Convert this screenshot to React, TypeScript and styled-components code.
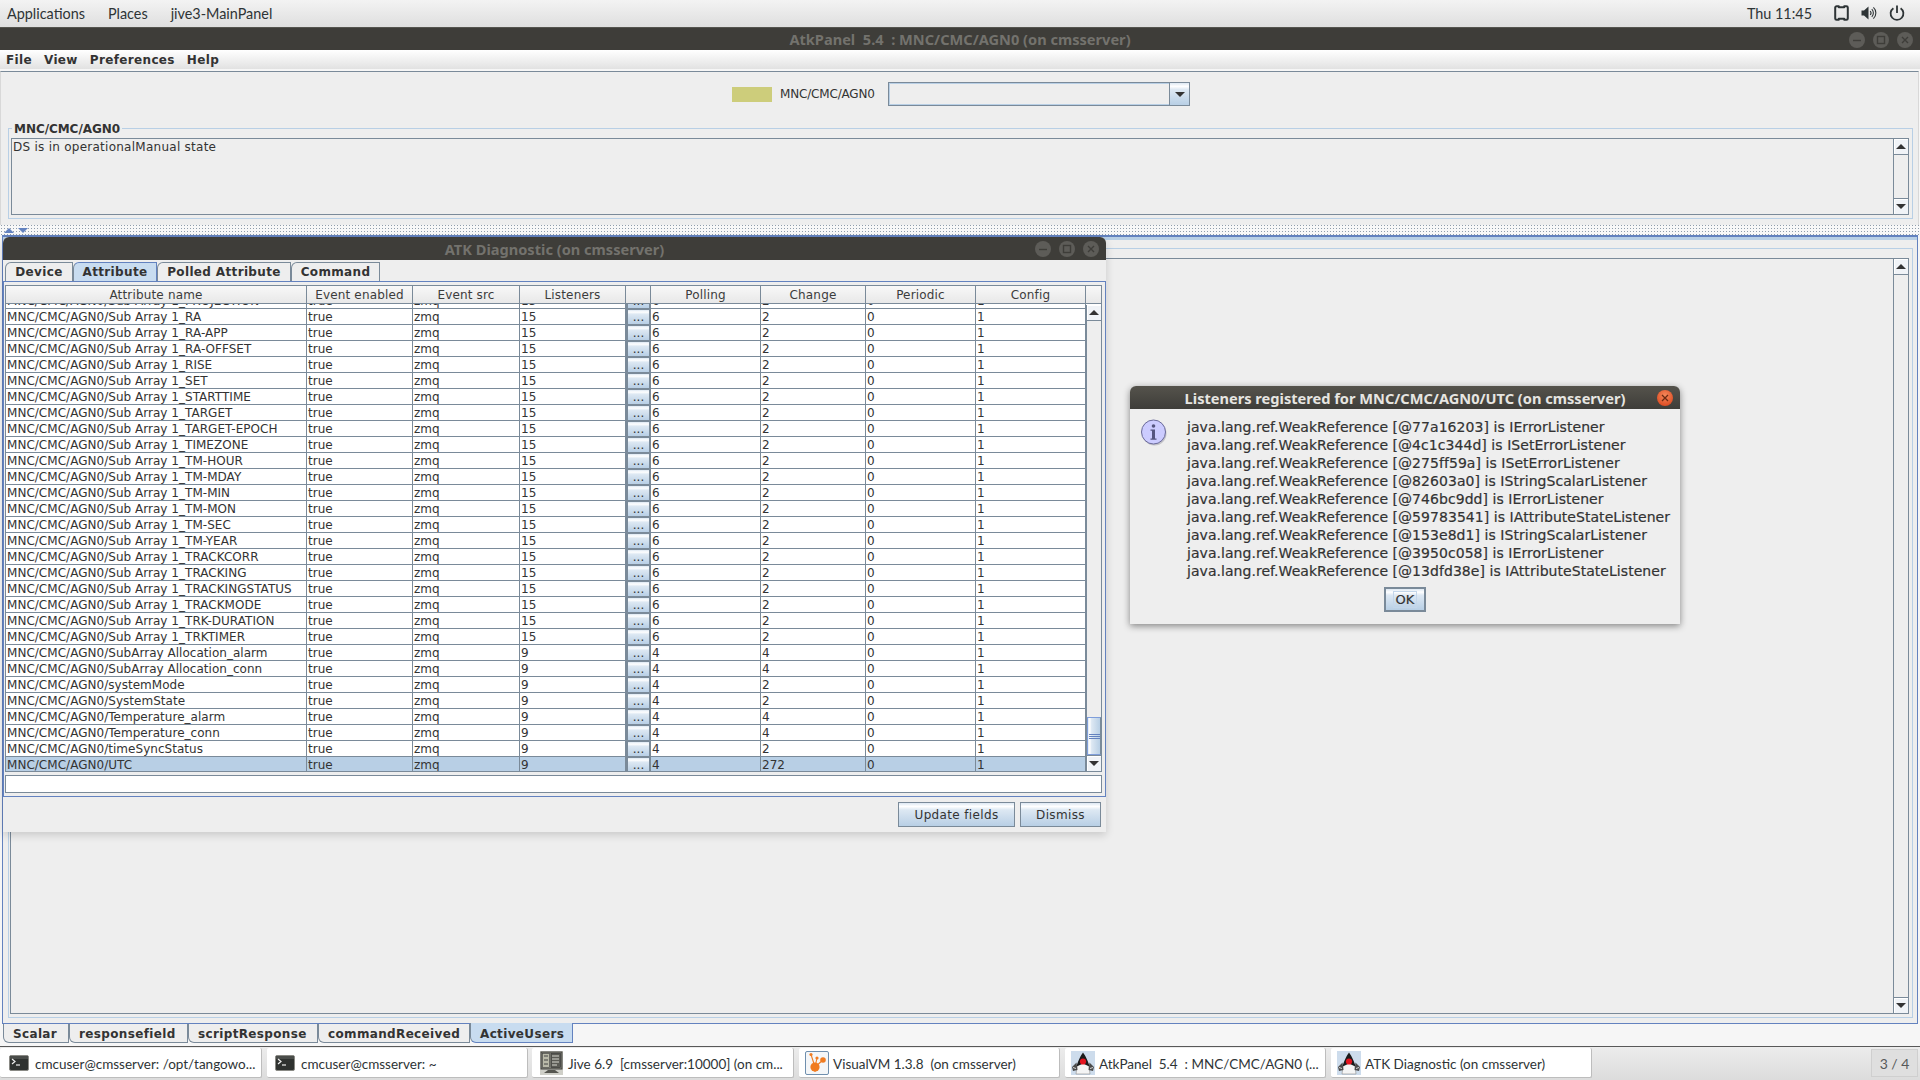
import React from "react";
import styled, { createGlobalStyle } from "styled-components";

const Global = createGlobalStyle`
  html, body { margin: 0; padding: 0; background: #eeeeee; }
  * { box-sizing: border-box; }
`;

const GNOME = `"Lato", "Noto Sans", sans-serif`;
const JAVA = `"DejaVu Sans", sans-serif`;
const LINE = "#7a8a99";
const LIGHT = "#b8cfe5";
const BLUE = "#6382bf";
const BTN = "linear-gradient(#dde8f3 0%, #ffffff 15%, #dde8f3 30%, #b8cfe5 100%)";
const BTN_H = "linear-gradient(90deg, #dde8f3 0%, #ffffff 15%, #dde8f3 30%, #b8cfe5 100%)";

const Desktop = styled.div`
  position: relative; width: 1920px; height: 1080px; overflow: hidden;
  display: flex; flex-direction: column; background: #eeeeee; color: #333333;
  font-family: ${JAVA}; font-size: 12px;
`;

/* ---------- GNOME top panel ---------- */
const TopBar = styled.div`
  flex: none; height: 28px; display: flex; align-items: center; padding: 0 15px 1px 7px;
  background: linear-gradient(#f3f3f3, #dfdfdf); border-bottom: 1px solid #55554f;
  font-family: ${GNOME}; font-size: 14.4px; color: #2e3436;
`;
const TopItem = styled.span`
  margin-right: 23px; white-space: pre;
`;
const TopSpacer = styled.div`flex: 1;`;
const Clock = styled.span`margin-right: 10px; font-size: 14.4px;`;
const TrayIcon = styled.svg`
  display: block; margin-left: 12px; flex: none; color: #2e3436;
`;

/* ---------- window frame ---------- */
const AtkWindow = styled.div`
  flex: 1; min-height: 0; display: flex; flex-direction: column;
`;
const TitleBar = styled.div`
  position: relative; flex: none; height: ${(p) => p.$h}px; background: #3e3d39;
  display: flex; align-items: center; justify-content: center;
  border-radius: ${(p) => p.$r}px ${(p) => p.$r}px 0 0;
`;
const TitleText = styled.span`
  font-family: "Noto Sans", sans-serif; font-weight: 700; font-size: 14.6px; color: #73726d;
  white-space: pre;
`;
const WmButtons = styled.div`
  position: absolute; right: 7px; top: 4px; display: flex; gap: 8px;
`;
const WmButton = styled.svg`display: block;`;

const MenuBar = styled.div`
  flex: none; height: 19px; display: flex; align-items: center; padding-left: 6px; gap: 12px;
  background: linear-gradient(#ffffff, #e2e2e2);
  font-weight: 700; font-size: 12px;
`;
const MenuLabel = styled.span`letter-spacing: 0.35px;`;

const Panel = styled.div`
  flex: 1; min-height: 0; display: flex; flex-direction: column; padding-top: 2px; background: #f6f6f6;
`;

/* ---------- upper pane ---------- */
const UpperPane = styled.div`
  flex: none; height: 154px; border-top: 1px solid ${LINE}; border-left: 1px solid #d8d8d8;
  border-right: 1px solid #d8d8d8; background: #eeeeee; padding: 10px 5px 0 7px;
  margin-right: 1px;
`;
const StatusRow = styled.div`
  height: 24px; display: flex; align-items: center; margin-left: 724px;
`;
const Swatch = styled.div`width: 40px; height: 15px; background: #cdcd7b; margin-right: 8px;`;
const StatusName = styled.span`width: 108px; font-size: 12px; letter-spacing: -0.17px;`;
const Combo = styled.div`
  width: 302px; height: 24px; display: flex; border: 1px solid ${LINE};
  box-shadow: inset 0 0 0 1px ${LIGHT};
`;
const ComboField = styled.div`flex: 1; border-right: 1px solid ${LINE};`;
const ComboButton = styled.div`
  width: 19px; display: flex; align-items: center; justify-content: center;
  background: ${BTN};
`;
const ArrowDown = styled.div`
  width: 0; height: 0; border-left: 5px solid transparent; border-right: 5px solid transparent;
  border-top: 5px solid #333;
`;
const ArrowUp = styled.div`
  width: 0; height: 0; border-left: 5px solid transparent; border-right: 5px solid transparent;
  border-bottom: 5px solid #333;
`;

const Group = styled.div`
  position: relative; height: 91px; margin-top: 22px; border: 1px solid ${LIGHT};
  padding: 9px 3px 3px 2px;
`;
const GroupTitle = styled.span`
  position: absolute; left: 3px; top: -7px; padding: 0 2px; background: #eeeeee;
  font-weight: 700; font-size: 12px; letter-spacing: -0.05px; line-height: 14px;
`;
const TextArea = styled.div`
  height: 77px; border: 1px solid ${LINE}; display: flex;
`;
const TextBody = styled.div`flex: 1; padding: 0 1px; line-height: 16px; letter-spacing: 0.26px;`;

const VScroll = styled.div`
  width: ${(p) => p.$w}px; flex: none; display: flex; flex-direction: column; justify-content: space-between;
  border-left: 1px solid ${LINE}; background: #eeeeee;
`;
const ScrollBtnTop = styled.div`
  height: 16px; display: flex; align-items: center; justify-content: center;
  background: #f0f3f7; border-bottom: 1px solid ${LINE}; box-shadow: inset 1px 1px 0 #fff;
`;
const ScrollBtnBottom = styled(ScrollBtnTop)`
  border-bottom: 0; border-top: 1px solid ${LINE};
`;

/* ---------- splitter ---------- */
const Splitter = styled.div`
  flex: none; height: 10px; display: flex; align-items: center; gap: 4px; padding-left: 4px;
  background-color: #f8f8f8;
  background-image: radial-gradient(#8f9dab 0.6px, transparent 0.8px);
  background-size: 3px 3px; background-position: 0 2px;
`;
const SplitUp = styled.div`
  width: 0; height: 0; border-left: 5px solid transparent; border-right: 5px solid transparent;
  border-bottom: 5px solid ${BLUE};
`;
const SplitDown = styled.div`
  width: 0; height: 0; border-left: 5px solid transparent; border-right: 5px solid transparent;
  border-top: 5px solid ${BLUE};
`;

/* ---------- lower pane ---------- */
const LowerPane = styled.div`
  flex: none; height: 789px; margin-left: 2px; margin-right: 2px;
  border: 1px solid ${BLUE}; border-top-width: 2px; background: #eeeeee;
  display: flex; flex-direction: column;
`;
const LowerBand = styled.div`flex: none; height: 3px; background: ${LIGHT};`;
const LowerGroup = styled.div`
  flex: 1; min-height: 0; margin: 8px 4px 5px 5px; border: 1px solid ${LIGHT}; padding: 9px 3px 3px 1px;
  display: flex;
`;
const LowerArea = styled.div`
  flex: 1; border: 1px solid ${LINE}; display: flex; justify-content: flex-end;
`;
const BottomTabs = styled.div`
  flex: none; height: 22px; display: flex; padding-left: 3px; align-items: flex-start;
`;
const BottomTab = styled.div`
  width: ${(p) => p.$w}px; display: flex; align-items: center; padding-left: ${(p) => p.$pad}px; padding-top: 2px;
  font-weight: 700; font-size: 12px; letter-spacing: 0.35px;
  background: ${(p) => (p.$active ? "#c8dcf0" : "#eeeeee")};
  border: 1px solid ${(p) => (p.$active ? BLUE : LINE)}; border-top: 0; border-left-color: ${LINE};
  border-bottom-left-radius: 6px;
  margin-top: ${(p) => (p.$active ? "-1px" : "0")};
  height: ${(p) => (p.$active ? "20px" : "19px")};
`;

/* ---------- task bar ---------- */
const TaskBar = styled.div`
  flex: none; height: 34px; display: flex; align-items: flex-start; padding-top: 1px;
  background: linear-gradient(#ececec, #dcdcdc); border-top: 1px solid #585858;
`;
const TaskItem = styled.div`
  width: ${(p) => p.$w}px; margin-right: ${(p) => p.$gap}px; height: 30px; flex: none; display: flex; align-items: center;
  padding-left: ${(p) => p.$pad}px; background: #ffffff; border-right: 1px solid #bdbdbd; border-bottom: 1px solid #bdbdbd;
  border-radius: 2px; font-family: ${GNOME}; font-size: 13.5px; color: #2e3436; white-space: pre;
`;
const TaskLabel = styled.span`position: relative; top: 1px;`;
const TaskIcon = styled.svg`display: block; flex: none; margin-right: ${(p) => p.$gap}px;`;
const Pager = styled.div`
  margin-left: auto; margin-right: 2px; margin-top: 1px; width: 47px; height: 28px; display: flex; align-items: center;
  justify-content: center; background: #dfdfdf; border: 1px solid #cfcfcf;
  font-family: ${GNOME}; font-size: 14px; color: #56595a;
`;

/* ---------- diagnostic window ---------- */
const DiagWindow = styled.div`
  position: absolute; left: 3px; top: 237px; width: 1103px; height: 595px;
  display: flex; flex-direction: column; background: #eeeeee;
  border-radius: 6px 6px 0 0; box-shadow: 0 3px 8px rgba(0, 0, 0, 0.16);
`;
const TabStrip = styled.div`
  flex: none; height: 21px; display: flex; align-items: flex-end; padding-left: 2px;
`;
const TopTab = styled.div`
  width: ${(p) => p.$w}px; height: 19px; display: flex; align-items: center; justify-content: center;
  font-weight: 700; font-size: 12px; letter-spacing: 0.35px;
  background: ${(p) => (p.$active ? "#c8dcf0" : "#eeeeee")};
  border: 1px solid ${(p) => (p.$active ? BLUE : LINE)}; border-bottom: 0; border-left-color: ${LINE};
  border-top-left-radius: 6px;
`;
const TabPane = styled.div`
  flex: none; height: 516px; border: 1px solid ${BLUE}; padding: 3px 3px 2px 1px;
  display: flex; flex-direction: column;
`;
const Table = styled.div`
  flex: none; height: 487px; border: 1px solid ${LINE}; display: flex; flex-direction: column;
  background: #ffffff; overflow: hidden;
`;
const COLS = "301px 106px 107px 106px 25px 110px 105px 110px 110px";
const HeaderRow = styled.div`
  flex: none; height: 18px; display: flex;
  background: linear-gradient(#f8f8f8, #e8e8e8); border-bottom: 1px solid ${LINE};
`;
const HeaderCols = styled.div`
  width: 1080px; display: grid; grid-template-columns: ${COLS};
`;
const HeaderCell = styled.div`
  text-align: center; line-height: 19px; letter-spacing: 0.17px; border-right: 1px solid ${LINE}; color: #3c3c3c; overflow: hidden;
`;
const TableBody = styled.div`flex: 1; min-height: 0; display: flex;`;
const Rows = styled.div`width: 1080px; display: flex; flex-direction: column;`;
const Row = styled.div`
  flex: none; height: ${(p) => p.$h}px; display: grid; grid-template-columns: ${COLS}; align-content: end;
  background: ${(p) => (p.$selected ? LIGHT : "#ffffff")}; border-bottom: 1px solid ${LINE};
  overflow: hidden;
`;
const Cell = styled.div`
  border-right: 1px solid ${LINE}; padding-left: 1px; line-height: 17px; height: 15px; white-space: pre;
  letter-spacing: ${(p) => p.$ls || 0}px;
`;
const RowButton = styled.div`
  height: 15px; background: ${BTN}; border-left: 2px solid ${LINE}; border-right: 2px solid ${LINE};
  border-top: 1px solid ${LINE};
  text-align: center; font-size: 12px; line-height: 14px; color: #333;
`;
const TableScroll = styled.div`
  width: 15px; flex: none; display: flex; flex-direction: column; background: #eeeeee; border-left: 1px solid ${LINE};
  margin-top: 1px;
`;
const TableTrack = styled.div`flex: 1;`;
const Thumb = styled.div`
  height: 38px; flex: none; background: ${BTN_H}; border: 1px solid #7f9edb; border-right-color: ${LINE};
  display: flex; flex-direction: column; gap: 1px; align-items: center; justify-content: center;
`;
const Grip = styled.div`width: 11px; height: 1px; background: ${BLUE};`;
const Field = styled.div`
  flex: none; height: 18px; margin-top: 3px; background: #ffffff; border: 1px solid ${LINE};
`;
const DiagButtons = styled.div`
  flex: none; display: flex; justify-content: flex-end; gap: 5px; padding: 5px 5px 0 0;
`;
const ActionButton = styled.div`
  width: ${(p) => p.$w}px; height: 25px; border: 1px solid ${LINE}; background: ${BTN};
  display: flex; align-items: center; justify-content: center; letter-spacing: 0.35px;
`;

/* ---------- listeners dialog ---------- */
const Dialog = styled.div`
  position: absolute; left: 1130px; top: 386px; width: 550px; height: 238px; background: #eeeeee;
  border-radius: 6px 6px 0 0; box-shadow: 0 2px 7px rgba(0, 0, 0, 0.45);
  display: flex; flex-direction: column;
`;
const DialogTitle = styled.div`
  position: relative; flex: none; height: 23px; display: flex; align-items: center; justify-content: center;
  background: linear-gradient(#55534c, #3e3d39); border-radius: 6px 6px 0 0;
  font-family: "Noto Sans", sans-serif; font-weight: 700; font-size: 14.6px; color: #e6e5e1; white-space: pre;
`;
const CloseDot = styled.svg`position: absolute; right: 7px; top: 4px; display: block;`;
const DialogBody = styled.div`
  flex: 1; display: flex; padding: 10px 0 0 11px;
`;
const InfoIcon = styled.svg`display: block; flex: none; margin-right: 20px;`;
const DialogLines = styled.div`display: flex; flex-direction: column; margin-top: -1px;`;
const DialogLine = styled.div`
  height: 18px; line-height: 18px; font-size: 14px; white-space: pre; letter-spacing: 0.05px;
  -webkit-text-stroke: 0.2px #333;
`;
const OkRow = styled.div`flex: none; display: flex; justify-content: center; padding-bottom: 12px;`;
const OkButton = styled.div`
  width: 42px; height: 25px; border: 2px solid ${LINE}; background: ${BTN}; padding: 2px 7px;
  display: flex; font-size: 13px; -webkit-text-stroke: 0.2px #333;
`;
const OkFocus = styled.div`
  flex: 1; display: flex; align-items: center; justify-content: center; border: 1px solid #c3d6ea;
`;

/* ---------- drawings ---------- */
const Wm = ({ kind }: { kind: "min" | "max" | "close" }) => (
  <WmButton width="16" height="16" viewBox="0 0 16 16">
    <circle cx="8" cy="8" r="8" fill="#5d5c58" />
    {kind === "min" && <path d="M4 8.5h8" stroke="#3e3d39" strokeWidth="1.4" />}
    {kind === "max" && <rect x="4.5" y="4.5" width="7" height="7" fill="none" stroke="#3e3d39" strokeWidth="1.4" />}
    {kind === "close" && <path d="M5 5l6 6M11 5l-6 6" stroke="#3e3d39" strokeWidth="1.4" />}
  </WmButton>
);

const TerminalIcon = () => (
  <TaskIcon $gap={6} width="20" height="16" viewBox="0 0 20 16">
    <rect x="0.5" y="0.5" width="19" height="15" rx="1.5" fill="#2f3230" stroke="#8a8a85" />
    <rect x="1" y="1" width="18" height="3" fill="#4a4d4a" />
    <path d="M3 4l3 2.5L3 9" fill="none" stroke="#f0f0f0" strokeWidth="1.2" />
    <path d="M7 10h4" stroke="#f0f0f0" strokeWidth="1.2" />
  </TaskIcon>
);
const JiveIcon = () => (
  <TaskIcon $gap={5} width="23" height="24" viewBox="0 0 23 24">
    <rect x="0" y="0" width="23" height="24" fill="#cfcfc8" />
    <rect x="1" y="1" width="21" height="17" fill="#8a8a80" stroke="#3f3f3a" />
    <rect x="2.5" y="2.5" width="7" height="14" fill="#b9b9a8" stroke="#444" strokeWidth="0.6" />
    <rect x="11" y="2.5" width="9.5" height="14" fill="#5b5b55" stroke="#333" strokeWidth="0.6" />
    <path d="M12 5h7M12 8h7M12 11h7M12 14h5" stroke="#d8d8d0" />
    <path d="M4 5h4M4 9h4M4 13h4" stroke="#444" />
    <path d="M8 19l-4 3h15l-4-3z" fill="#55554f" />
  </TaskIcon>
);
const VisualVmIcon = () => (
  <TaskIcon $gap={4} width="24" height="24" viewBox="0 0 24 24">
    <rect x="0.5" y="0.5" width="23" height="23" rx="1.5" fill="#f4f6f8" stroke="#6f8fae" />
    <circle cx="10" cy="16" r="4.6" fill="#f07c22" />
    <circle cx="18" cy="9" r="2.8" fill="#f07c22" />
    <circle cx="12" cy="7" r="1.6" fill="#f07c22" />
    <circle cx="6" cy="3.5" r="1.6" fill="#f07c22" />
    <path d="M10 16L18 9M10 16l2-9M10 16L6 3.5M10 16v5" stroke="#f07c22" strokeWidth="1.1" />
  </TaskIcon>
);
const DukeIcon = () => (
  <TaskIcon $gap={4} width="24" height="24" viewBox="0 0 24 24">
    <rect x="0" y="0" width="24" height="24" fill="#cddcec" />
    <path d="M5 23l1-8 6-3 6 3 1 8z" fill="#f4f4f4" stroke="#8b8b8b" strokeWidth="0.6" />
    <path d="M12 1.5C14 4 17.5 11 18.5 15.5L12 12.5 5.5 15.5C6.5 11 10 4 12 1.5z" fill="#1b1b1b" />
    <circle cx="12" cy="10.5" r="3.1" fill="#e3141f" />
    <path d="M5.5 11.5L1 16l1 4 4.5-1zM18.5 11.5L23 16l-1 4-4.5-1z" fill="#4b4b4b" />
    <path d="M2 16.5l3 1M22 16.5l-3 1" stroke="#d8d8d8" />
  </TaskIcon>
);

const SUBS = [
  "RA", "RA-APP", "RA-OFFSET", "RISE", "SET", "STARTTIME", "TARGET", "TARGET-EPOCH", "TIMEZONE",
  "TM-HOUR", "TM-MDAY", "TM-MIN", "TM-MON", "TM-SEC", "TM-YEAR", "TRACKCORR", "TRACKING",
  "TRACKINGSTATUS", "TRACKMODE", "TRK-DURATION", "TRKTIMER",
];
const ROWS = [
  ...SUBS.map((s) => ({ n: `Sub Array 1_${s}`, l: "15", p: "6", c: "2" })),
  { n: "SubArray Allocation_alarm", l: "9", p: "4", c: "4" },
  { n: "SubArray Allocation_conn", l: "9", p: "4", c: "4" },
  { n: "systemMode", l: "9", p: "4", c: "2" },
  { n: "SystemState", l: "9", p: "4", c: "2" },
  { n: "Temperature_alarm", l: "9", p: "4", c: "4" },
  { n: "Temperature_conn", l: "9", p: "4", c: "4" },
  { n: "timeSyncStatus", l: "9", p: "4", c: "2" },
  { n: "UTC", l: "9", p: "4", c: "272" },
];
const HEAD = ["Attribute name", "Event enabled", "Event src", "Listeners", "", "Polling", "Change", "Periodic", "Config"];
const LISTENERS = [
  "[@77a16203] is IErrorListener",
  "[@4c1c344d] is ISetErrorListener",
  "[@275ff59a] is ISetErrorListener",
  "[@82603a0] is IStringScalarListener",
  "[@746bc9dd] is IErrorListener",
  "[@59783541] is IAttributeStateListener",
  "[@153e8d1] is IStringScalarListener",
  "[@3950c058] is IErrorListener",
  "[@13dfd38e] is IAttributeStateListener",
];

const DataRow = ({ n, l, p, c, h, selected }: { n: string; l: string; p: string; c: string; h: number; selected?: boolean }) => (
  <Row $h={h} $selected={selected}>
    <Cell $ls={0.03}>{`MNC/CMC/AGN0/${n}`}</Cell>
    <Cell>true</Cell>
    <Cell>zmq</Cell>
    <Cell>{l}</Cell>
    <RowButton>...</RowButton>
    <Cell>{p}</Cell>
    <Cell>{c}</Cell>
    <Cell>0</Cell>
    <Cell>1</Cell>
  </Row>
);

export default function App() {
  return (
    <Desktop>
      <Global />
      <TopBar>
        <TopItem>Applications</TopItem>
        <TopItem>Places</TopItem>
        <TopItem>jive3-MainPanel</TopItem>
        <TopSpacer />
        <Clock>Thu 11:45</Clock>
        <TrayIcon width="15" height="16" viewBox="0 0 15 16">
          <path d="M2.6 1.2h2.2v1h5.4v-1h2.2a1.4 1.4 0 0 1 1.4 1.4v10.8a1.4 1.4 0 0 1-1.4 1.4h-2.2v-1H4.8v1H2.6a1.4 1.4 0 0 1-1.4-1.4V2.6a1.4 1.4 0 0 1 1.4-1.4z" fill="none" stroke="currentColor" strokeWidth="2" strokeLinejoin="round" />
        </TrayIcon>
        <TrayIcon width="16" height="16" viewBox="0 0 16 16">
          <path d="M0.5 5.5h2.5L7.5 1.5v13L3 10.5H0.5z" fill="currentColor" />
          <path d="M9.2 6a3 3 0 0 1 0 4M10.8 4.2a5.4 5.4 0 0 1 0 7.6M12.4 2.4a7.6 7.6 0 0 1 0 11.2" fill="none" stroke="currentColor" strokeWidth="1.1" />
        </TrayIcon>
        <TrayIcon width="16" height="16" viewBox="0 0 16 16">
          <path d="M8 0.5v7.5" stroke="currentColor" strokeWidth="1.8" />
          <path d="M4.4 3.2a6.4 6.4 0 1 0 7.2 0" fill="none" stroke="currentColor" strokeWidth="1.8" />
        </TrayIcon>
      </TopBar>

      <AtkWindow>
        <TitleBar $h={22} $r={0}>
          <TitleText>{"AtkPanel  5.4  : MNC/CMC/AGN0 (on cmsserver)"}</TitleText>
          <WmButtons>
            <Wm kind="min" />
            <Wm kind="max" />
            <Wm kind="close" />
          </WmButtons>
        </TitleBar>
        <MenuBar>
          <MenuLabel>File</MenuLabel>
          <MenuLabel>View</MenuLabel>
          <MenuLabel>Preferences</MenuLabel>
          <MenuLabel>Help</MenuLabel>
        </MenuBar>
        <Panel>
          <UpperPane>
            <StatusRow>
              <Swatch />
              <StatusName>MNC/CMC/AGN0</StatusName>
              <Combo>
                <ComboField />
                <ComboButton><ArrowDown /></ComboButton>
              </Combo>
            </StatusRow>
            <Group>
              <GroupTitle>MNC/CMC/AGN0</GroupTitle>
              <TextArea>
                <TextBody>DS is in operationalManual state</TextBody>
                <VScroll $w={15}>
                  <ScrollBtnTop><ArrowUp /></ScrollBtnTop>
                  <ScrollBtnBottom><ArrowDown /></ScrollBtnBottom>
                </VScroll>
              </TextArea>
            </Group>
          </UpperPane>
          <Splitter>
            <SplitUp />
            <SplitDown />
          </Splitter>
          <LowerPane>
            <LowerBand />
            <LowerGroup>
              <LowerArea>
                <VScroll $w={15}>
                  <ScrollBtnTop><ArrowUp /></ScrollBtnTop>
                  <ScrollBtnBottom><ArrowDown /></ScrollBtnBottom>
                </VScroll>
              </LowerArea>
            </LowerGroup>
          </LowerPane>
          <BottomTabs>
            <BottomTab $w={66} $pad={9}>Scalar</BottomTab>
            <BottomTab $w={119} $pad={9}>responsefield</BottomTab>
            <BottomTab $w={130} $pad={9}>scriptResponse</BottomTab>
            <BottomTab $w={152} $pad={9}>commandReceived</BottomTab>
            <BottomTab $w={103} $pad={9} $active>ActiveUsers</BottomTab>
          </BottomTabs>
        </Panel>
      </AtkWindow>

      <TaskBar>
        <TaskItem $w={262} $gap={5} $pad={9}><TerminalIcon /><TaskLabel>cmcuser@cmsserver: /opt/tangowo...</TaskLabel></TaskItem>
        <TaskItem $w={261} $gap={4} $pad={8}><TerminalIcon /><TaskLabel>cmcuser@cmsserver: ~</TaskLabel></TaskItem>
        <TaskItem $w={262} $gap={5} $pad={8}><JiveIcon /><TaskLabel>{"Jive 6.9  [cmsserver:10000] (on cm..."}</TaskLabel></TaskItem>
        <TaskItem $w={261} $gap={5} $pad={6}><VisualVmIcon /><TaskLabel>{"VisualVM 1.3.8  (on cmsserver)"}</TaskLabel></TaskItem>
        <TaskItem $w={261} $gap={5} $pad={6}><DukeIcon /><TaskLabel>{"AtkPanel  5.4  : MNC/CMC/AGN0 (..."}</TaskLabel></TaskItem>
        <TaskItem $w={261} $gap={0} $pad={6}><DukeIcon /><TaskLabel>ATK Diagnostic (on cmsserver)</TaskLabel></TaskItem>
        <Pager>3 / 4</Pager>
      </TaskBar>

      <DiagWindow>
        <TitleBar $h={23} $r={6}>
          <TitleText>ATK Diagnostic (on cmsserver)</TitleText>
          <WmButtons>
            <Wm kind="min" />
            <Wm kind="max" />
            <Wm kind="close" />
          </WmButtons>
        </TitleBar>
        <TabStrip>
          <TopTab $w={68}>Device</TopTab>
          <TopTab $w={84} $active>Attribute</TopTab>
          <TopTab $w={134}>Polled Attribute</TopTab>
          <TopTab $w={89}>Command</TopTab>
        </TabStrip>
        <TabPane>
          <Table>
            <HeaderRow>
              <HeaderCols>
                {HEAD.map((h, i) => <HeaderCell key={i}>{h}</HeaderCell>)}
              </HeaderCols>
            </HeaderRow>
            <TableBody>
              <Rows>
                <DataRow n="Sub Array 1_PROJECTION" l="15" p="6" c="2" h={5} />
                {ROWS.map((r) => (
                  <DataRow key={r.n} {...r} h={16} selected={r.n === "UTC"} />
                ))}
              </Rows>
              <TableScroll>
                <ScrollBtnTop><ArrowUp /></ScrollBtnTop>
                <TableTrack />
                <Thumb><Grip /><Grip /><Grip /></Thumb>
                <ScrollBtnBottom><ArrowDown /></ScrollBtnBottom>
              </TableScroll>
            </TableBody>
          </Table>
          <Field />
        </TabPane>
        <DiagButtons>
          <ActionButton $w={117}>Update fields</ActionButton>
          <ActionButton $w={81}>Dismiss</ActionButton>
        </DiagButtons>
      </DiagWindow>

      <Dialog>
        <DialogTitle>
          Listeners registered for MNC/CMC/AGN0/UTC (on cmsserver)
          <CloseDot width="16" height="16" viewBox="0 0 16 16">
            <defs>
              <radialGradient id="closeRed" cx="50%" cy="35%" r="65%">
                <stop offset="0%" stopColor="#f58a5c" />
                <stop offset="100%" stopColor="#dd4b22" />
              </radialGradient>
            </defs>
            <circle cx="8" cy="8" r="8" fill="url(#closeRed)" />
            <path d="M5 5l6 6M11 5l-6 6" stroke="#6b2a12" strokeWidth="1.3" />
          </CloseDot>
        </DialogTitle>
        <DialogBody>
          <InfoIcon width="26" height="28" viewBox="0 0 26 28">
            <circle cx="13.5" cy="14.5" r="12" fill="#8d8d99" opacity="0.45" />
            <circle cx="12.5" cy="13" r="12" fill="#ccccff" stroke="#6a6a99" strokeWidth="1" />
            <circle cx="12.5" cy="7" r="1.8" fill="#55557f" />
            <path d="M9.5 10.5h4.5v9h1.5v1.2h-6v-1.2h1.5v-7.8h-1.5z" fill="#55557f" />
          </InfoIcon>
          <DialogLines>
            {LISTENERS.map((l) => (
              <DialogLine key={l}>{`java.lang.ref.WeakReference ${l}`}</DialogLine>
            ))}
          </DialogLines>
        </DialogBody>
        <OkRow>
          <OkButton><OkFocus>OK</OkFocus></OkButton>
        </OkRow>
      </Dialog>
    </Desktop>
  );
}
